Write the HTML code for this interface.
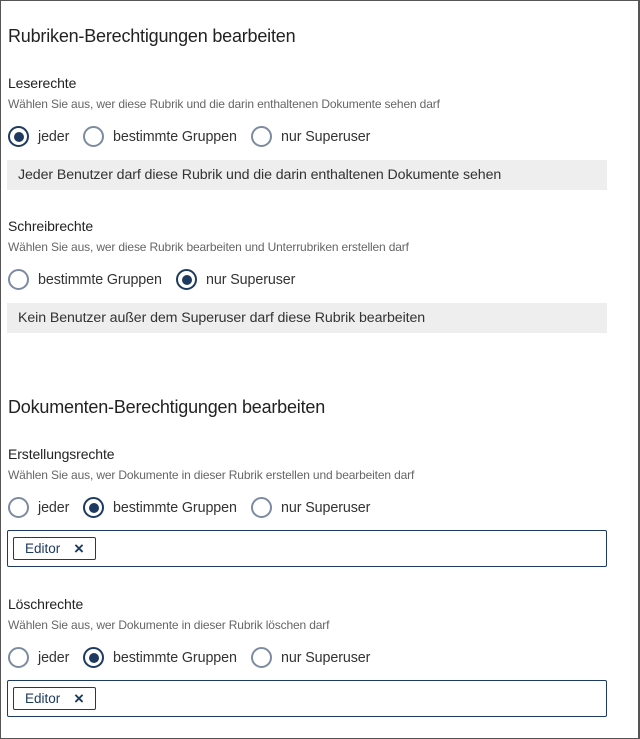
<!DOCTYPE html>
<html><head><meta charset="utf-8"><style>
*{margin:0;padding:0;box-sizing:border-box}
html,body{width:640px;height:739px;background:#fff;overflow:hidden}
body{font-family:"Liberation Sans",sans-serif;color:#222;position:relative}
.frame{position:absolute;left:0;top:0;width:640px;height:739px;border:1px solid #555;border-width:1px 2px 1px 1px}
.a{position:absolute;white-space:nowrap}
.h{font-size:18px;color:#222;letter-spacing:-0.2px}
.l{font-size:14px;color:#222;letter-spacing:-0.1px}
.s{font-size:12px;color:#666;letter-spacing:-0.15px}
.r{position:absolute;width:21px;height:21px;border:2px solid #7d8ba0;border-radius:50%}
.r.c{border-color:#1e3a60}
.r.c::after{content:"";position:absolute;left:3.5px;top:3.5px;width:10px;height:10px;border-radius:50%;background:#1e3a60}
.t{font-size:14.3px;color:#333;letter-spacing:-0.1px;margin-top:2px}
.box{position:absolute;left:7px;width:600px;height:30px;background:#eee;font-size:14.2px;color:#333;padding:7px 0 0 11px;letter-spacing:-0.1px}
.inp{position:absolute;left:7px;width:600px;height:37px;border:1px solid #1e3a60;border-radius:2px}
.tag{position:absolute;left:5px;top:6px;width:83px;height:23px;border:1px solid #1e3a60;border-radius:2px;font-size:13.5px;color:#1e3a60;padding:3px 0 0 11px}
.tag b{position:absolute;left:60px;top:1px;font-size:17px;font-weight:bold}
</style></head><body>
<div class="frame"></div>
<div class="a h" style="left:8px;top:26px">Rubriken-Berechtigungen bearbeiten</div>
<div class="a l" style="left:8px;top:75px">Leserechte</div>
<div class="a s" style="left:8px;top:97px">Wählen Sie aus, wer diese Rubrik und die darin enthaltenen Dokumente sehen darf</div>
<div class="r c" style="left:8px;top:126px"></div><div class="a t" style="left:38px;top:127px">jeder</div>
<div class="r" style="left:83px;top:126px"></div><div class="a t" style="left:113px;top:127px">bestimmte Gruppen</div>
<div class="r" style="left:251px;top:126px"></div><div class="a t" style="left:281px;top:127px">nur Superuser</div>
<div class="box" style="top:160px">Jeder Benutzer darf diese Rubrik und die darin enthaltenen Dokumente sehen</div>

<div class="a l" style="left:8px;top:218px">Schreibrechte</div>
<div class="a s" style="left:8px;top:240px">Wählen Sie aus, wer diese Rubrik bearbeiten und Unterrubriken erstellen darf</div>
<div class="r" style="left:8px;top:269px"></div><div class="a t" style="left:38px;top:270px">bestimmte Gruppen</div>
<div class="r c" style="left:176px;top:269px"></div><div class="a t" style="left:206px;top:270px">nur Superuser</div>
<div class="box" style="top:303px">Kein Benutzer außer dem Superuser darf diese Rubrik bearbeiten</div>

<div class="a h" style="left:8px;top:397px">Dokumenten-Berechtigungen bearbeiten</div>
<div class="a l" style="left:8px;top:446px">Erstellungsrechte</div>
<div class="a s" style="left:8px;top:468px">Wählen Sie aus, wer Dokumente in dieser Rubrik erstellen und bearbeiten darf</div>
<div class="r" style="left:8px;top:497px"></div><div class="a t" style="left:38px;top:498px">jeder</div>
<div class="r c" style="left:83px;top:497px"></div><div class="a t" style="left:113px;top:498px">bestimmte Gruppen</div>
<div class="r" style="left:251px;top:497px"></div><div class="a t" style="left:281px;top:498px">nur Superuser</div>
<div class="inp" style="top:530px"><div class="tag">Editor<b>×</b></div></div>

<div class="a l" style="left:8px;top:596px">Löschrechte</div>
<div class="a s" style="left:8px;top:618px">Wählen Sie aus, wer Dokumente in dieser Rubrik löschen darf</div>
<div class="r" style="left:8px;top:647px"></div><div class="a t" style="left:38px;top:648px">jeder</div>
<div class="r c" style="left:83px;top:647px"></div><div class="a t" style="left:113px;top:648px">bestimmte Gruppen</div>
<div class="r" style="left:251px;top:647px"></div><div class="a t" style="left:281px;top:648px">nur Superuser</div>
<div class="inp" style="top:680px"><div class="tag">Editor<b>×</b></div></div>
</body></html>
